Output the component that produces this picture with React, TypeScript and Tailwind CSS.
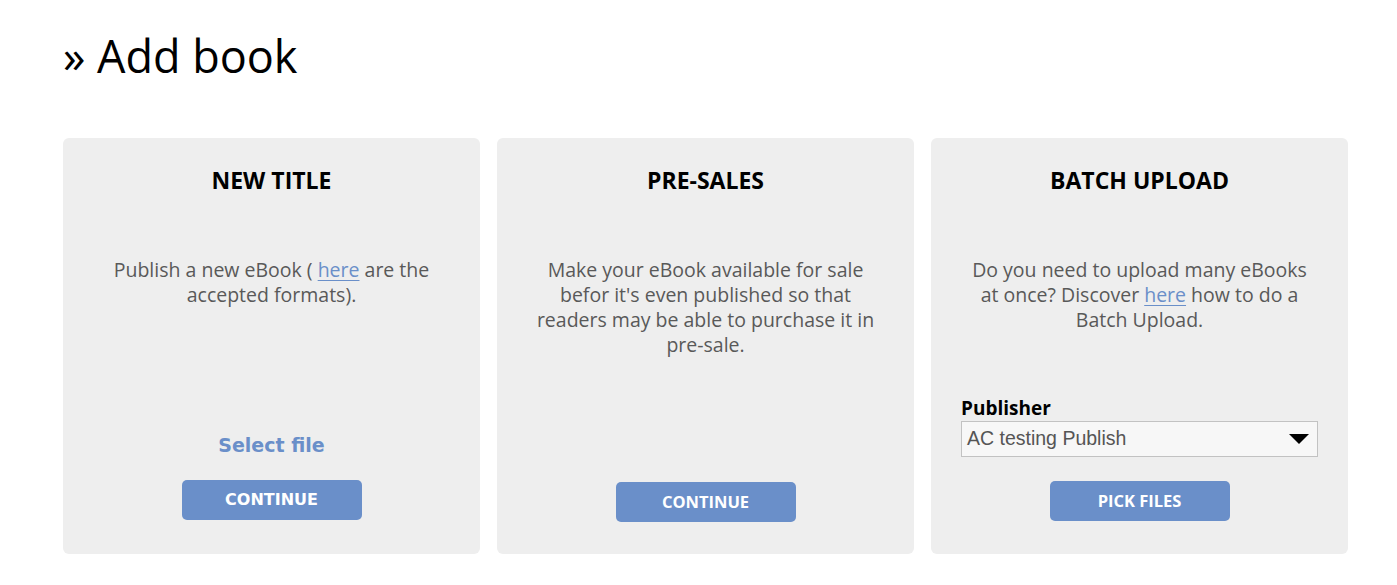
import React from "react";

const body = "font-['Open_Sans',sans-serif]";

function Btn({ children, verdana }: { children: React.ReactNode; verdana?: boolean }) {
  return (
    <button
      className={
        "w-[180px] h-[40px] rounded-[5px] bg-[#6a8fc9] text-white font-bold leading-none " +
        (verdana ? "font-['DejaVu_Sans',Verdana,sans-serif] text-[16px]" : "font-['Open_Sans',sans-serif] text-[16.5px]")
      }
    >
      {children}
    </button>
  );
}

function Card({ title, children, bottom, pb }: { title: string; children: React.ReactNode; bottom: React.ReactNode; pb: string }) {
  return (
    <div className={"bg-[#eeeeee] rounded-[6px] h-[416px] flex flex-col items-center pt-[30px] px-[30px] " + pb}>
      <h2 className={body + " font-bold text-[23px] leading-[24px] text-black"}>{title}</h2>
      <div className={body + " mt-[65px] text-[19.5px] leading-[25px] text-[#595959] text-center w-[350px]"}>{children}</div>
      <div className="flex-1" />
      {bottom}
    </div>
  );
}

const Link = ({ children }: { children: React.ReactNode }) => (
  <a className="text-[#6a8fc9] underline underline-offset-[3px]" href="#">
    {children}
  </a>
);

export default function App() {
  return (
    <div className="bg-white w-[1397px] h-[585px] pl-[63px] pt-[33px]">
      <h1 className={body + " text-[45px] leading-[45px] font-normal text-black"}>» Add book</h1>
      <div className="mt-[60px] grid grid-cols-3 gap-[17px] w-[1285px]">
        <Card
          title="NEW TITLE"
          pb="pb-[34px]"
          bottom={
            <div className="flex flex-col items-center">
              <div className="font-['DejaVu_Sans',Verdana,sans-serif] font-bold text-[19px] leading-[24px] text-[#6a8fc9]">Select file</div>
              <div className="mt-[23px]">
                <Btn verdana>CONTINUE</Btn>
              </div>
            </div>
          }
        >
          Publish a new eBook ( <Link>here</Link> are the accepted formats).
        </Card>
        <Card title="PRE-SALES" pb="pb-[32px]" bottom={<Btn>CONTINUE</Btn>}>
          Make your eBook available for sale befor it's even published so that readers may be able to purchase it in pre-sale.
        </Card>
        <Card
          title="BATCH UPLOAD"
          pb="pb-[33px]"
          bottom={
            <div className="flex flex-col items-center w-full">
              <div className="w-full">
                <div className={body + " font-bold text-[19px] leading-[22px] text-black"}>Publisher</div>
                <div className="mt-[2px] h-[36px] w-[357px] border border-[#c2c2c2] bg-[#f7f7f7] flex items-center justify-between pl-[5px] pr-[8px]">
                  <span className="font-['Liberation_Sans',Arial,sans-serif] text-[19.5px] text-[#555555]">AC testing Publish</span>
                  <svg width="20" height="11" viewBox="0 0 20 11">
                    <path d="M0 0 L20 0 L10 10 Z" fill="#000" />
                  </svg>
                </div>
              </div>
              <div className="mt-[24px]">
                <Btn>PICK FILES</Btn>
              </div>
            </div>
          }
        >
          Do you need to upload many eBooks at once? Discover <Link>here</Link> how to do a Batch Upload.
        </Card>
      </div>
    </div>
  );
}
